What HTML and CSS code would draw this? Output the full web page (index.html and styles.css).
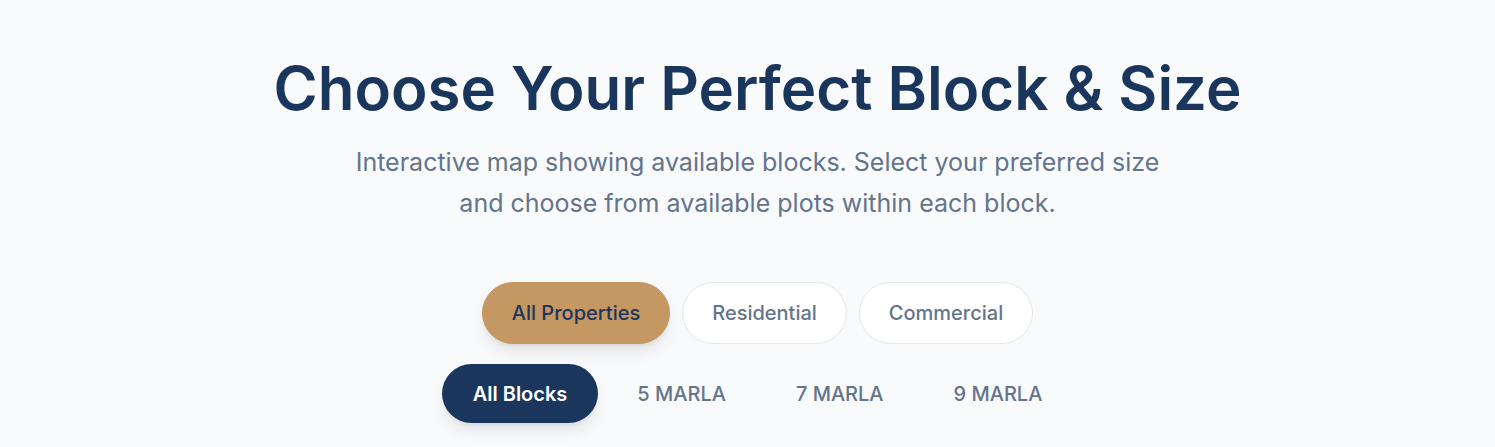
FILE: index.html
```html
<!DOCTYPE html>
<html lang="en">
<head>
<meta charset="utf-8">
<title>Choose Your Perfect Block & Size</title>
<link rel="stylesheet" href="styles.css">
</head>
<body>
<section class="section">
  <div class="container">
    <h1 class="title">Choose Your Perfect Block &amp; Size</h1>
    <p class="lead">Interactive map showing available blocks. Select your preferred size and choose from available plots within each block.</p>
    <div class="types">
      <button class="pill pill-active">All Properties</button>
      <button class="pill">Residential</button>
      <button class="pill">Commercial</button>
    </div>
    <div class="sizes">
      <button class="tab tab-active">All Blocks</button>
      <button class="tab">5 MARLA</button>
      <button class="tab">7 MARLA</button>
      <button class="tab">9 MARLA</button>
    </div>
  </div>
</section>
</body>
</html>
```
FILE: styles.css
```css
* { box-sizing: border-box; }
html, body { margin: 0; padding: 0; }
body {
  background: #f8fafc;
  font-family: Inter, "Noto Sans", sans-serif;
  color: #1b365d;
  height: 447px;
  overflow: hidden;
}
.section { padding: 52px 0 0 20px; }
.container {
  display: flex;
  flex-direction: column;
  align-items: center;
}
.title {
  margin: 0;
  font-size: 60px;
  line-height: 72px;
  font-weight: 600;
  color: #1b365d;
  letter-spacing: 0;
}
.lead {
  margin: 18px 0 0;
  max-width: 830px;
  text-align: center;
  font-size: 25px;
  line-height: 41px;
  color: #64748b;
}
.types {
  display: flex;
  gap: 12px;
  margin-top: 58px;
}
.pill {
  font-family: inherit;
  font-size: 20px;
  font-weight: 500;
  line-height: 28px;
  padding: 16px 29px;
  border-radius: 9999px;
  border: 1px solid #e5e7eb;
  background: #fff;
  color: #64748b;
}
.pill-active {
  background: #c49763;
  border-color: #c49763;
  color: #1b365d;
  box-shadow: 0 10px 15px -3px rgba(0,0,0,0.1), 0 4px 6px -4px rgba(0,0,0,0.1);
}
.sizes {
  display: flex;
  gap: 8px;
  margin-top: 20px;
}
.tab {
  font-family: inherit;
  font-size: 20px;
  font-weight: 500;
  line-height: 28px;
  padding: 15.5px 31px;
  border-radius: 9999px;
  border: 0;
  background: transparent;
  color: #64748b;
}
.tab-active {
  background: #1b365d;
  color: #fff;
  font-weight: 600;
  box-shadow: 0 10px 15px -3px rgba(0,0,0,0.1), 0 4px 6px -4px rgba(0,0,0,0.1);
}
```
